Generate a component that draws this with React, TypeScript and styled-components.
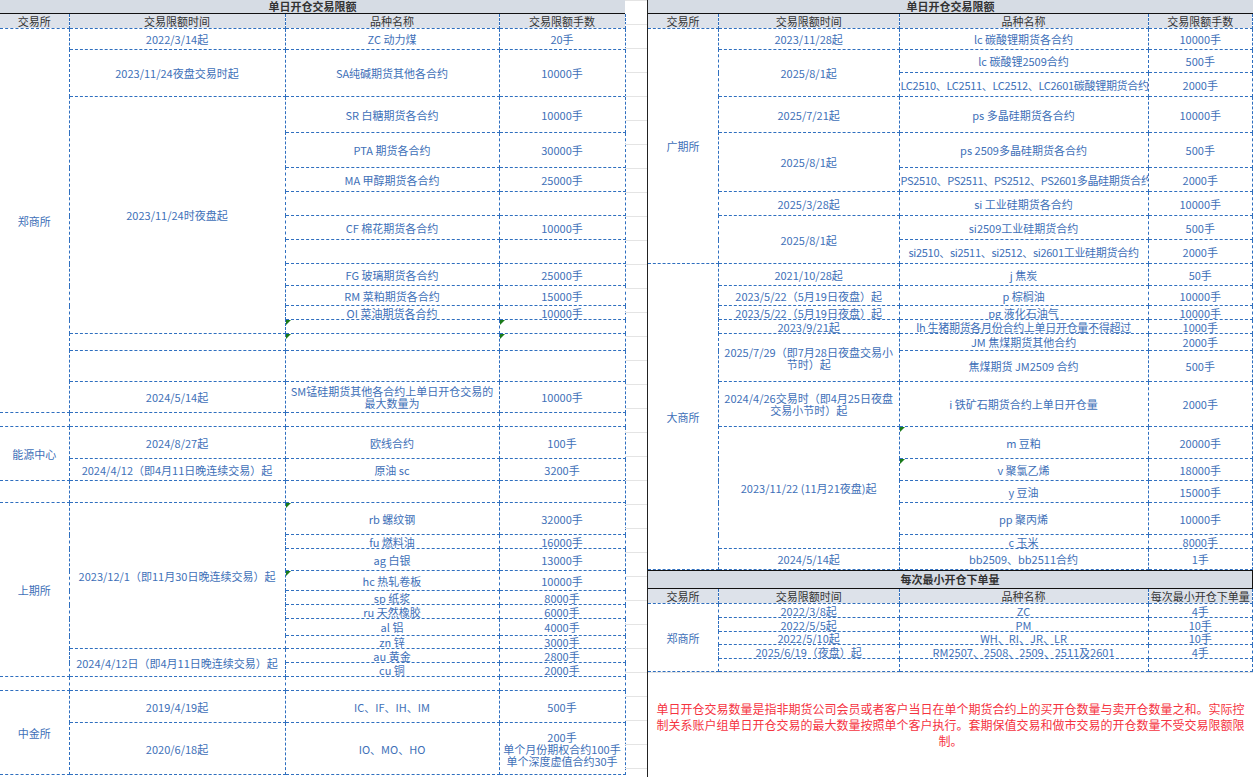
import React from "react";
import styled, { createGlobalStyle } from "styled-components";

const Global = createGlobalStyle`
  html, body { margin: 0; padding: 0; background: #fff; }
  body { font-family: "Microsoft YaHei", "Noto Sans CJK SC", "Noto Sans", sans-serif; }
`;

type Cell = { t?: string; rs?: number; mark?: boolean; nw?: boolean };
type Row = { h: number; c: Cell[] };

const Page = styled.div`
  display: flex;
  width: 1253px;
  height: 777px;
  overflow: hidden;
`;
const Panel = styled.div<{ w: number; edge?: boolean }>`
  width: ${(p) => p.w}px;
  flex: none;
  display: flex;
  flex-direction: column;
  border-left: ${(p) => (p.edge ? "1px solid #222" : "none")};
`;
const Gutter = styled.div`
  width: 22px;
  flex: none;
  background-image: linear-gradient(#e4e4e4 1px, transparent 1px);
  background-size: 100% 24px;
`;
const Title = styled.div<{ boxed?: boolean }>`
  height: ${(p) => (p.boxed ? 17 : 13)}px;
  line-height: ${(p) => (p.boxed ? 17 : 13)}px;
  background: #d6dce4;
  border-bottom: 1px solid #111;
  border-top: ${(p) => (p.boxed ? "1px solid #111" : "none")};
  border-right: ${(p) => (p.boxed ? "1px solid #111" : "none")};
  text-align: center;
  font-size: 11px;
  font-weight: bold;
  color: #333;
  overflow: visible;
`;
const Table = styled.table`
  border-collapse: collapse;
  table-layout: fixed;
  width: 100%;
`;
const Tr = styled.tr<{ h: number }>`
  height: ${(p) => p.h}px;
`;
const Th = styled.th`
  background: #dde2ea;
  font-weight: normal;
  font-size: 11px;
  line-height: 12px;
  color: #333;
  padding: 0;
  height: 14px;
  border: 1px dashed #2f6fbf;
  border-top: none;
  white-space: nowrap;
  overflow: hidden;
  &:first-child { border-left: none; }
`;
const Td = styled.td<{ mark?: boolean; nw?: boolean }>`
  position: relative;
  padding: 0 1px;
  font-size: 11px;
  line-height: 12px;
  color: #4070b8;
  text-align: center;
  vertical-align: middle;
  border: 1px dashed #2f6fbf;
  white-space: ${(p) => (p.nw ? "nowrap" : "pre-line")};
  letter-spacing: ${(p) => (p.nw ? "-0.3px" : "0")};
  overflow: hidden;
  &:first-child { border-left: none; }
  &::before {
    content: "";
    display: ${(p) => (p.mark ? "block" : "none")};
    position: absolute;
    left: 0;
    top: 0;
    border-top: 5px solid #1a7a1a;
    border-right: 5px solid transparent;
  }
`;
const Note = styled.div`
  flex: 1;
  display: flex;
  align-items: center;
  justify-content: center;
  padding: 0 6px;
  color: #f5333f;
  font-size: 12px;
  line-height: 16px;
  text-align: center;
  border-top: 1px solid #e2e2e2;
`;

const Grid: React.FC<{ cols: number[]; head: string[]; rows: Row[] }> = ({ cols, head, rows }) => (
  <Table>
    <colgroup>
      {cols.map((w, i) => (
        <col key={i} style={{ width: w }} />
      ))}
    </colgroup>
    <thead>
      <tr>
        {head.map((h) => (
          <Th key={h}>{h}</Th>
        ))}
      </tr>
    </thead>
    <tbody>
      {rows.map((r, i) => (
        <Tr key={i} h={r.h}>
          {r.c.map((c, j) => (
            <Td key={j} rowSpan={c.rs} mark={c.mark} nw={c.nw}>
              {c.t}
            </Td>
          ))}
        </Tr>
      ))}
    </tbody>
  </Table>
);

const e: Cell = { t: "" };
const L: Row[] = [
  { h: 21, c: [{ t: "郑商所", rs: 15 }, { t: "2022/3/14起" }, { t: "ZC 动力煤" }, { t: "20手" }] },
  { h: 47, c: [{ t: "2023/11/24夜盘交易时起" }, { t: "SA纯碱期货其他各合约" }, { t: "10000手" }] },
  { h: 36, c: [{ t: "2023/11/24时夜盘起", rs: 10 }, { t: "SR 白糖期货各合约" }, { t: "10000手" }] },
  { h: 35, c: [{ t: "PTA 期货各合约" }, { t: "30000手" }] },
  { h: 24, c: [{ t: "MA 甲醇期货各合约" }, { t: "25000手" }] },
  { h: 24, c: [e, e] },
  { h: 24, c: [{ t: "CF 棉花期货各合约" }, { t: "10000手" }] },
  { h: 24, c: [e, e] },
  { h: 22, c: [{ t: "FG 玻璃期货各合约" }, { t: "25000手" }] },
  { h: 20, c: [{ t: "RM 菜粕期货各合约" }, { t: "15000手" }] },
  { h: 14, c: [{ t: "OI 菜油期货各合约" }, { t: "10000手" }] },
  { h: 14, c: [{ t: "", mark: true }, { t: "", mark: true }] },
  { h: 17, c: [e, { t: "", mark: true }, { t: "", mark: true }] },
  { h: 31, c: [e, e, e] },
  { h: 31, c: [{ t: "2024/5/14起" }, { t: "SM锰硅期货其他各合约上单日开仓交易的最大数量为" }, { t: "10000手" }] },
  { h: 14, c: [e, e, e, e] },
  { h: 32, c: [{ t: "能源中心", rs: 2 }, { t: "2024/8/27起" }, { t: "欧线合约" }, { t: "100手" }] },
  { h: 22, c: [{ t: "2024/4/12（即4月11日晚连续交易）起" }, { t: "原油 sc" }, { t: "3200手" }] },
  { h: 22, c: [e, e, e, e] },
  { h: 32, c: [{ t: "上期所", rs: 10 }, { t: "2023/12/1（即11月30日晚连续交易）起", rs: 8 }, { t: "rb 螺纹钢", mark: true }, { t: "32000手" }] },
  { h: 14, c: [{ t: "fu 燃料油" }, { t: "16000手" }] },
  { h: 22, c: [{ t: "ag 白银" }, { t: "13000手" }] },
  { h: 20, c: [{ t: "hc 热轧卷板", mark: true }, { t: "10000手" }] },
  { h: 14, c: [{ t: "sp 纸浆" }, { t: "8000手" }] },
  { h: 14, c: [{ t: "ru 天然橡胶" }, { t: "6000手" }] },
  { h: 17, c: [{ t: "al  铝" }, { t: "4000手" }] },
  { h: 11, c: [{ t: "zn 锌" }, { t: "3000手" }] },
  { h: 14, c: [{ t: "2024/4/12日（即4月11日晚连续交易）起", rs: 2 }, { t: "au 黄金" }, { t: "2800手" }] },
  { h: 14, c: [{ t: "cu 铜" }, { t: "2000手" }] },
  { h: 14, c: [e, e, e, e] },
  { h: 32, c: [{ t: "中金所", rs: 2 }, { t: "2019/4/19起" }, { t: "IC、IF、IH、IM" }, { t: "500手" }] },
  { h: 52, c: [{ t: "2020/6/18起" }, { t: "IO、MO、HO" }, { t: "200手\n单个月份期权合约100手\n单个深度虚值合约30手" }] },
];

const R: Row[] = [
  { h: 21, c: [{ t: "广期所", rs: 9 }, { t: "2023/11/28起" }, { t: "lc 碳酸锂期货各合约" }, { t: "10000手" }] },
  { h: 23, c: [{ t: "2025/8/1起", rs: 2 }, { t: "lc 碳酸锂2509合约" }, { t: "500手" }] },
  { h: 24, c: [{ t: "LC2510、LC2511、LC2512、LC2601碳酸锂期货合约", nw: true }, { t: "2000手" }] },
  { h: 36, c: [{ t: "2025/7/21起" }, { t: "ps 多晶硅期货各合约" }, { t: "10000手" }] },
  { h: 35, c: [{ t: "2025/8/1起", rs: 2 }, { t: "ps 2509多晶硅期货各合约" }, { t: "500手" }] },
  { h: 24, c: [{ t: "PS2510、PS2511、PS2512、PS2601多晶硅期货合约", nw: true }, { t: "2000手" }] },
  { h: 24, c: [{ t: "2025/3/28起" }, { t: "si 工业硅期货各合约" }, { t: "10000手" }] },
  { h: 24, c: [{ t: "2025/8/1起", rs: 2 }, { t: "si2509工业硅期货合约" }, { t: "500手" }] },
  { h: 24, c: [{ t: "si2510、si2511、si2512、si2601工业硅期货合约", nw: true }, { t: "2000手" }] },
  { h: 22, c: [{ t: "大商所", rs: 13 }, { t: "2021/10/28起" }, { t: "j 焦炭" }, { t: "50手" }] },
  { h: 20, c: [{ t: "2023/5/22（5月19日夜盘）起" }, { t: "p 棕榈油" }, { t: "10000手" }] },
  { h: 14, c: [{ t: "2023/5/22（5月19日夜盘）起" }, { t: "pg 液化石油气" }, { t: "10000手" }] },
  { h: 14, c: [{ t: "2023/9/21起" }, { t: "lh 生猪期货各月份合约上单日开仓量不得超过", nw: true }, { t: "1000手" }] },
  { h: 17, c: [{ t: "2025/7/29（即7月28日夜盘交易小节时）起", rs: 2 }, { t: "JM 焦煤期货其他合约" }, { t: "2000手" }] },
  { h: 31, c: [{ t: "焦煤期货 JM2509 合约" }, { t: "500手" }] },
  { h: 45, c: [{ t: "2024/4/26交易时（即4月25日夜盘交易小节时）起" }, { t: "i 铁矿石期货合约上单日开仓量" }, { t: "2000手" }] },
  { h: 32, c: [{ t: "2023/11/22 (11月21夜盘)起", rs: 5 }, { t: "m 豆粕", mark: true }, { t: "20000手" }] },
  { h: 22, c: [{ t: "v 聚氯乙烯", mark: true }, { t: "18000手" }] },
  { h: 22, c: [{ t: "y 豆油" }, { t: "15000手" }] },
  { h: 32, c: [{ t: "pp 聚丙烯" }, { t: "10000手" }] },
  { h: 14, c: [{ t: "c 玉米" }, { t: "8000手" }] },
  { h: 21, c: [{ t: "2024/5/14起" }, { t: "bb2509、bb2511合约" }, { t: "1手" }] },
];

const M: Row[] = [
  { h: 14, c: [{ t: "郑商所", rs: 5 }, { t: "2022/3/8起" }, { t: "ZC" }, { t: "4手" }] },
  { h: 14, c: [{ t: "2022/5/5起" }, { t: "PM" }, { t: "10手" }] },
  { h: 12, c: [{ t: "2022/5/10起" }, { t: "WH、RI、JR、LR" }, { t: "10手" }] },
  { h: 14, c: [{ t: "2025/6/19（夜盘）起" }, { t: "RM2507、2508、2509、2511及2601" }, { t: "4手" }] },
  { h: 13, c: [e, e, e] },
];

const HEAD = ["交易所", "交易限额时间", "品种名称", "交易限额手数"];

export default function App() {
  return (
    <>
      <Global />
      <Page>
        <Panel w={625}>
          <Title>单日开仓交易限额</Title>
          <Grid cols={[69, 216, 214, 126]} head={HEAD} rows={L} />
        </Panel>
        <Gutter />
        <Panel w={605} edge>
          <Title>单日开仓交易限额</Title>
          <Grid cols={[70, 180, 248, 104]} head={HEAD} rows={R} />
          <Title boxed>每次最小开仓下单量</Title>
          <Grid cols={[70, 180, 248, 104]} head={["交易所", "交易限额时间", "品种名称", "每次最小开仓下单量"]} rows={M} />
          <Note>
            单日开仓交易数量是指非期货公司会员或者客户当日在单个期货合约上的买开仓数量与卖开仓数量之和。实际控制关系账户组单日开仓交易的最大数量按照单个客户执行。套期保值交易和做市交易的开仓数量不受交易限额限制。
          </Note>
        </Panel>
      </Page>
    </>
  );
}
